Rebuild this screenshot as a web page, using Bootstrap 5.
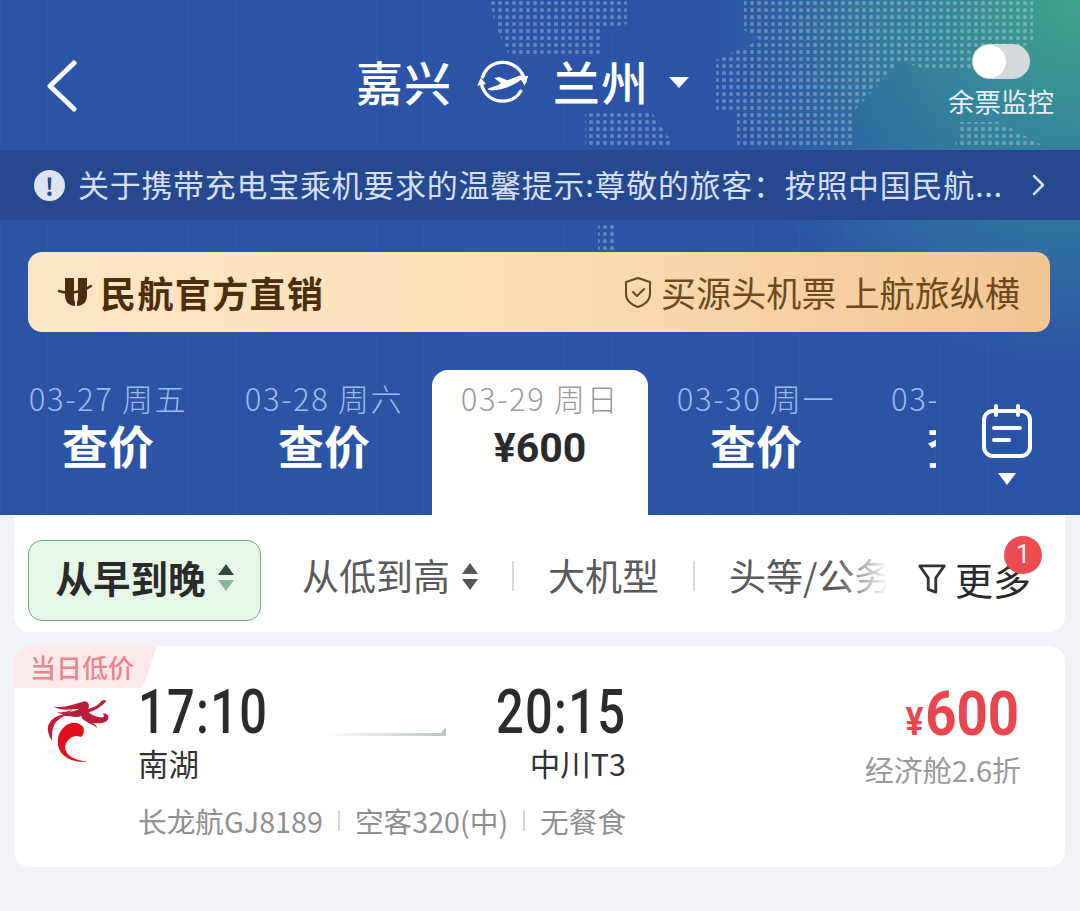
<!DOCTYPE html>
<html lang="zh-CN">
<head>
  <meta charset="UTF-8">
  <title>嘉兴 - 兰州</title>
  <meta name="viewport" content="width=device-width, initial-scale=1">
  <link href="https://cdn.jsdelivr.net/npm/bootstrap@5.3.2/dist/css/bootstrap.min.css" rel="stylesheet">
  <style>
    body { background: #f0f2f5; font-family: "Noto Sans CJK SC", "Noto Sans", sans-serif; width: 1080px; height: 911px; overflow: hidden; }
    .num-font { font-family: Roboto, "Liberation Sans", sans-serif; }

    /* 上部ブルー */
    .hero { height: 515px; background: radial-gradient(circle 370px at 100% 0, #3fa58b 0, #35849a 40%, rgba(44,85,168,0) 100%), repeating-linear-gradient(90deg, rgba(255,255,255,.025) 0 1px, transparent 1px 47px), #2b54a7; position: relative; overflow: hidden; }
    .hero > *:not(.world-map) { position: relative; }
    .world-map { position: absolute; left: 0; top: 0; }
    .top-head { height: 150px; padding: 12px 25px 0 46px; color: #fff; }
    .back-arrow { margin-top: 10px; }
    .city { font-size: 47px; font-weight: 500; line-height: 1; letter-spacing: 1px; }
    .route { margin-left: 278px; margin-top: -2px; }
    .route-icon { margin: 0 24px 0 24px; }
    .caret-down { width: 0; height: 0; border-left: 10px solid transparent; border-right: 10px solid transparent; border-top: 11px solid #fff; margin: 4px 0 0 20px; }
    .monitor { width: 108px; margin-left: auto; margin-top: -3px; }
    .switch-pill { width: 58px; height: 35px; border-radius: 18px; background: #d5d9de; position: relative; }
    .switch-pill::after { content: ""; position: absolute; left: 1px; top: 1px; width: 33px; height: 33px; border-radius: 50%; background: #fff; }
    .monitor-text { font-size: 26.5px; line-height: 1; margin-top: 9px; white-space: nowrap; color: #e8edf6; }

    .notice-bar { height: 70px; background: #25488f; padding: 0 34px; color: #d5dff0; font-size: 31px; white-space: nowrap; }
    .notice-text { line-height: 1; letter-spacing: .7px; margin-top: -4px; }
    .warn-dot { width: 31px; height: 31px; border-radius: 50%; background: #dfe5f0; color: #25488f; font-size: 24px; font-weight: 700; line-height: 31px; text-align: center; flex: none; margin-right: 13px; }

    .promo { height: 80px; margin: 32px 30px 0 28px; border-radius: 14px; background: linear-gradient(90deg, #fde6c4 0, #fce2bb 40%, #f1c592 100%); padding: 0 30px; }
    .promo-left { font-size: 36px; font-weight: 700; color: #4a2e0e; letter-spacing: 1.4px; }
    .promo-right { font-size: 35px; color: #6d4a1c; white-space: nowrap; letter-spacing: .1px; }

    .date-strip { height: 145px; margin-top: 38px; }
    .date-tabs { width: 936px; overflow: hidden; flex: none; }
    .date-tab { width: 216px; flex: none; text-align: center; padding-top: 10px; }
    .date-tab.now { background: #fff; border-radius: 16px 16px 0 0; }
    .date-label { font-size: 31px; line-height: 36px; color: #9dbbee; white-space: nowrap; font-weight: 300; letter-spacing: 1.6px; }
    .date-tab.now .date-label { color: #9a9a9a; }
    .date-price { font-size: 46px; font-weight: 700; line-height: 60px; color: #fff; white-space: nowrap; margin-top: -2px; }
    .date-tab.now .date-price { color: #2b2b2b; font-size: 41px; line-height: 54px; margin-top: 5px; }
    .date-tab.cut { width: 72px; text-align: left; padding-left: 27px; }
    .date-tab.cut .date-price { margin-left: 36px; }
    .cal-col { margin-left: 45px; padding-top: 34px; }
    .caret-small { width: 0; height: 0; border-left: 9px solid transparent; border-right: 9px solid transparent; border-top: 12px solid #fff; margin: 15px auto 0; }

    /* 並び替え */
    .sort-box { height: 117px; margin: 0 15px 0 14px; background: #fff; border-radius: 0 0 16px 16px; position: relative; padding-left: 14px; }
    .sort-on { width: 233px; height: 81px; margin-top: 25px; border: 1.5px solid #6fa685; border-radius: 14px; background: #e6f7e9; font-size: 37.5px; font-weight: 700; color: #2a2a2a; flex: none; padding-bottom: 6px; }
    .sort-list { width: 586px; margin-left: 41px; margin-top: 25px; height: 81px; font-size: 37px; color: #5a5a5a; white-space: nowrap; overflow: hidden; position: relative; flex: none; padding-bottom: 9px; }
    .sort-list::after { content: ""; position: absolute; right: 0; top: 0; width: 50px; height: 100%; background: linear-gradient(90deg, rgba(255,255,255,0), #fff); }
    .sort-sep { width: 2px; height: 30px; background: #d9d9d9; flex: none; margin: 0 34px; }
    .tri-pair { width: 16px; flex: none; margin-left: 12px; display: inline-block; }
    .tri-up, .tri-dn { display: block; width: 0; height: 0; border-left: 8px solid transparent; border-right: 8px solid transparent; }
    .tri-up { border-bottom: 11px solid #555; margin-bottom: 5px; }
    .tri-dn { border-top: 11px solid #555; }
    .sort-on .tri-up { border-bottom-color: #2f4a3a; }
    .sort-on .tri-dn { border-top-color: #8ab896; }
    .more-btn { position: absolute; left: 903px; top: 25px; height: 81px; font-size: 38px; color: #2a2a2a; white-space: nowrap; padding-bottom: 4px; }
    .more-dot { position: absolute; left: 990px; top: 21px; width: 38px; height: 38px; border-radius: 50%; background: #ec4b50; color: #fff; font-size: 25px; line-height: 38px; text-align: center; font-family: Roboto, sans-serif; }

    /* 便カード */
    .flight-box { height: 221px; margin: 14px 15px 0 14px; background: #fff; border-radius: 16px; position: relative; padding: 40px 44px 0 124px; }
    .low-tag { position: absolute; left: 0; top: 0; width: 143px; height: 42px; background: #fde8e9; border-radius: 16px 0 16px 0; clip-path: polygon(0 0, 100% 0, 90% 100%, 0 100%); color: #e5888e; font-size: 26px; font-weight: 500; line-height: 42px; padding-left: 16px; white-space: nowrap; }
    .air-logo { position: absolute; left: 32px; top: 49px; }
    .time-col { width: 130px; flex: none; }
    .flight-time { font-size: 61px; line-height: 52px; color: #2c2c2c; font-weight: 500; letter-spacing: 1.6px; width: max-content; transform: scaleX(.8); transform-origin: left center; }
    .place { font-size: 30.5px; line-height: 40px; color: #333; margin-top: 5px; white-space: nowrap; }
    .fly-line { width: 124px; height: 3px; margin: 47px 50px 0 54px; background: linear-gradient(90deg, rgba(190,198,198,0), #bcc4c4); position: relative; flex: none; }
    .fly-line::after { content: ""; position: absolute; right: 0; top: -6px; border-left: 5px solid transparent; border-bottom: 6px solid #bcc4c4; }
    .price-box { margin-left: auto; text-align: right; margin-top: 2px; }
    .price-main { font-size: 62px; line-height: 52px; font-weight: 700; color: #e8464f; width: max-content; margin-left: auto; margin-right: 2px; transform: scaleX(.88); transform-origin: right center; }
    .price-main span { font-size: 38px; margin-right: 2px; }
    .cabin { font-size: 29px; line-height: 38px; color: #999; margin-top: 2px; white-space: nowrap; }
    .detail-line { font-size: 28.7px; color: #8f8f8f; line-height: 36px; margin-top: 15px; white-space: nowrap; }
    .detail-sep { width: 2px; height: 20px; background: #d5d5d5; margin: 0 15px; }
  </style>
</head>
<body>

<div class="hero">
  <!-- 背景の世界地図ドット -->
  <svg class="world-map" width="1080" height="260" viewBox="0 0 1080 260">
    <defs>
      <pattern id="dotGrid" width="7" height="7" patternUnits="userSpaceOnUse">
        <rect x="1" y="1" width="4" height="4" rx="1.5" fill="#fff" fill-opacity=".26"/>
      </pattern>
      <clipPath id="landArea">
        <path d="M489 0H627V24L600 30V57H510L497 30Z"/>
        <path d="M744 0H1033V40L990 70H930L900 62L855 110L854 147H737L737 110H716V60L760 40L744 30Z"/>
        <path d="M585 110H650L675 147H585Z"/>
        <path d="M960 122H1000L1045 147H955Z"/>
        <path d="M598 222H614V252H598Z"/>
      </clipPath>
    </defs>
    <rect width="1080" height="260" fill="url(#dotGrid)" clip-path="url(#landArea)"/>
  </svg>

  <div class="top-head d-flex align-items-center">
    <svg class="back-arrow flex-shrink-0" width="32" height="52" viewBox="0 0 32 52" fill="none" stroke="#fff" stroke-width="5" stroke-linecap="round" stroke-linejoin="round"><path d="M28 3 4 26l24 23"/></svg>
    <div class="route d-flex align-items-center flex-shrink-0">
      <span class="city">嘉兴</span>
      <svg class="route-icon" width="53" height="45" viewBox="50 65 160 135" fill="none">
        <path d="M70 122C80 90 110 75 135 78c30 2 55 22 63 57M185 165c-15 25-35 30-55 30-30 0-58-20-64-55" stroke="#fff" stroke-width="10" stroke-linecap="round"/>
        <path d="M180 122l28-4-11 30zM54 148l26-5-16-19z" fill="#fff"/>
        <path d="M85 158c15-8 30-8 40-18l-20-15 15-3 25 10 35-14c15-3 15 4 5 12-20 18-55 30-80 32-10 1-17 0-20-4z" fill="#fff"/>
      </svg>
      <span class="city">兰州</span>
      <span class="caret-down"></span>
    </div>
    <div class="monitor d-flex flex-column align-items-center">
      <div class="switch-pill"></div>
      <div class="monitor-text">余票监控</div>
    </div>
  </div>

  <div class="notice-bar d-flex align-items-center">
    <span class="warn-dot">!</span>
    <span class="notice-text">关于携带充电宝乘机要求的温馨提示:尊敬的旅客：按照中国民航...</span>
    <svg class="ms-auto" width="14" height="22" viewBox="0 0 14 22" fill="none" stroke="#d5dff0" stroke-width="2.5" stroke-linecap="round" stroke-linejoin="round"><path d="M2 2l9 9-9 9"/></svg>
  </div>

  <div class="promo d-flex align-items-center justify-content-between">
    <div class="promo-left d-flex align-items-center">
      <svg class="me-2" width="34" height="30" viewBox="0 0 34 30" fill="none">
        <path d="M7 1h9v17c0 3 0 5 1 7v4c-6 0-10-4-10-11zM20 1h9v17c0 7-4 11-10 11v-4c1-2 1-4 1-7z" fill="#4a2e0e"/>
        <path d="M1 14c8 3 22 2 32-5" stroke="#4a2e0e" stroke-width="2.5" stroke-linecap="round"/>
      </svg>
      民航官方直销
    </div>
    <div class="promo-right d-flex align-items-center">
      <svg class="me-2" width="30" height="33" viewBox="0 0 30 33" fill="none" stroke="#6d4a1c" stroke-width="2" stroke-linecap="round" stroke-linejoin="round">
        <path d="M15 2l12 4v12c0 6-5 11-12 13C8 29 3 24 3 18V6z"/>
        <path d="M10 16l4 4 7-7"/>
      </svg>
      买源头机票&nbsp;上航旅纵横
    </div>
  </div>

  <div class="date-strip d-flex">
    <div class="date-tabs d-flex">
      <div class="date-tab"><div class="date-label">03-27 周五</div><div class="date-price">查价</div></div>
      <div class="date-tab"><div class="date-label">03-28 周六</div><div class="date-price">查价</div></div>
      <div class="date-tab now"><div class="date-label">03-29 周日</div><div class="date-price num-font">¥600</div></div>
      <div class="date-tab"><div class="date-label">03-30 周一</div><div class="date-price">查价</div></div>
      <div class="date-tab cut"><div class="date-label">03-</div><div class="date-price">查价</div></div>
    </div>
    <div class="cal-col">
      <svg width="52" height="54" viewBox="0 0 52 54" fill="none" stroke="#fff" stroke-width="4" stroke-linecap="round">
        <rect x="3" y="7" width="46" height="45" rx="9"/>
        <path d="M15 2v9M37 2v9M13 24h26M13 36h15"/>
      </svg>
      <div class="caret-small"></div>
    </div>
  </div>
</div>

<div class="sort-box d-flex">
  <div class="sort-on d-flex align-items-center justify-content-center">
    从早到晚<span class="tri-pair"><i class="tri-up"></i><i class="tri-dn"></i></span>
  </div>
  <div class="sort-list d-flex align-items-center">
    从低到高<span class="tri-pair"><i class="tri-up"></i><i class="tri-dn"></i></span>
    <span class="sort-sep"></span>大机型<span class="sort-sep"></span>头等/公务
  </div>
  <div class="more-btn d-flex align-items-center">
    <svg class="me-2" width="30" height="32" viewBox="0 0 30 34" fill="none" stroke="#333" stroke-width="3" stroke-linejoin="round"><path d="M2 3h26L19 16v15l-8-3V16z"/></svg>
    更多
  </div>
  <span class="more-dot">1</span>
</div>

<div class="flight-box">
  <div class="low-tag">当日低价</div>
  <svg class="air-logo" width="70" height="70" viewBox="80 20 200 200">
    <path d="M115 140C125 100 165 88 185 110c6 10 3 24-5 30-20-10-40 5-45 25-3 25 25 43 65 45-50 6-95-20-85-70z" fill="#e0101e"/>
    <path d="M100 52c30 8 60-6 90-14 16 2 16 18 5 32-20 24-45 6-75 10 20-12 40-12 55-20-20 0-50 8-75-8z" fill="#b81f3a"/>
    <path d="M86 108c8-22 28-32 60-36-16 8-34 18-42 32-4 8-8 26-7 48-8-14-14-30-11-44z" fill="#c81a30"/>
    <path d="M112 70c18 0 32-4 44-8-12 12-30 16-44 8z" fill="#b81f3a"/>
    <path d="M182 86c14 14 30 16 44 28-2-8-8-12-14-14 18 2 40 2 46-12 4-10-8-18-16-14 6 4 4 10-4 10-12 0-24-6-36-14 14-4 34-14 50-32-4-6-12-4-16 2-12 14-32 20-54 24z" fill="#b81f3a"/>
  </svg>
  <div class="d-flex">
    <div class="time-col">
      <div class="flight-time num-font">17:10</div>
      <div class="place">南湖</div>
    </div>
    <div class="fly-line"></div>
    <div class="time-col text-end">
      <div class="flight-time num-font">20:15</div>
      <div class="place">中川T3</div>
    </div>
    <div class="price-box">
      <div class="price-main num-font"><span>¥</span>600</div>
      <div class="cabin">经济舱2.6折</div>
    </div>
  </div>
  <div class="detail-line d-flex align-items-center">
    长龙航GJ8189<span class="detail-sep"></span>空客320(中)<span class="detail-sep"></span>无餐食
  </div>
</div>

<script src="https://cdn.jsdelivr.net/npm/bootstrap@5.3.2/dist/js/bootstrap.bundle.min.js"></script>
</body>
</html>
